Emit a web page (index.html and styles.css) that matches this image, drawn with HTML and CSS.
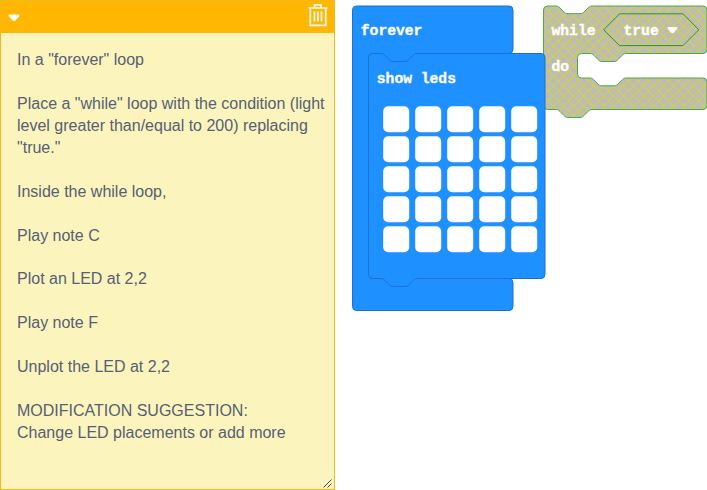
FILE: index.html
```html
<!DOCTYPE html>
<html lang="en">
<head>
<meta charset="utf-8">
<title>Blocks workspace</title>
<link rel="stylesheet" href="styles.css">
</head>
<body>
<main class="workspace">
  <section class="note">
    <header class="note-bar">
      <svg class="arrow" width="12" height="8" viewBox="0 0 12 8"><path d="M1.300.6h9.400q1.300.5.3 1.900L7.300 6.500q-1.300 1.100-2.600 0L1 2.500Q0 1.100 1.300.6z"/></svg>
      <svg class="trash" width="20" height="24" viewBox="0 0 20 24"><path d="M.5 5h19M6.500 5V1.800h6.500V5M2.300 5v17.300h15.400V5M6.500 8.500v10M10 8.500v10M13.500 8.500v10"/></svg>
    </header>
    <div class="note-text">In a "forever" loop

Place a "while" loop with the condition (light
level greater than/equal to 200) replacing
"true."

Inside the while loop,

Play note C

Plot an LED at 2,2

Play note F

Unplot the LED at 2,2

MODIFICATION SUGGESTION:
Change LED placements or add more</div>
    <svg class="grip" width="9" height="9" viewBox="0 0 9 9"><path d="M.5 8.500l8-8M4.500 8.500l4-4"/></svg>
  </section>
  <svg class="canvas" width="372" height="490" viewBox="335 0 372 490">
    <defs>
      <pattern id="hatch" x="543.5" y="6" width="10" height="10" patternUnits="userSpaceOnUse">
        <rect class="hatch-bg" width="10" height="10"/>
        <path class="hatch-line" d="M-1 -1L11 11M11 -1L-1 11M-1 9L1 11M9 -1L11 1M-1 1L1 -1M9 11L11 9"/>
      </pattern>
      <rect id="led" width="26" height="26" rx="5"/>
      <g id="row">
        <use href="#led"/><use href="#led" x="32"/><use href="#led" x="64"/><use href="#led" x="96"/><use href="#led" x="128"/>
      </g>
    </defs>
    <path class="disabled" d="M543.500 10q0-4 4-4H556c2 0 3 1 4 2l4 4c1 1 2 1.700 4 1.700h12c2 0 3-.7 4-1.700l4-4c1-1 2-2 4-2H703q4 0 4 4V49.500q0 4-4 4H626c-2 0-3 1-4 2l-4 4c-1 1-2 2-4 2h-12c-2 0-3-1-4-2l-4-4c-1-1-2-2-4-2h-8.500q-4 0-4 4V74q0 4 4 4H590c2 0 3 1 4 2l4 4c1 1 2 1.800 4 1.800h12c2 0 3-.8 4-1.800l4-4c1-1 2-2 4-2H703q4 0 4 4V105.500q0 4-4 4H592c-2 0-3 1-4 2l-4 4c-1 1-2 2-4 2h-12c-2 0-3-1-4-2l-4-4c-1-1-2-2-4-2H547.500q-4 0-4-4z"/>
    <path class="slot" d="M619.500 13.800H683L698.800 29.800 683 45.600H619.500L603.700 29.800z"/>
    <path class="block" d="M352.500 10q0-4 4-4H509q4 0 4 4V49.500q0 4-4 4V278.500q4 0 4 4V306.500q0 4-4 4H356.500q-4 0-4-4z"/>
    <path class="block" d="M368.500 57.500q0-4 4-4H381c2 0 3 1 4 2l4 4c1 1 2 2 4 2h12c2 0 3-1 4-2l4-4c1-1 2-2 4-2H541q4 0 4 4V274.500q0 4-4 4H417c-2 0-3 1-4 2l-4 4c-1 1-2 2-4 2h-12c-2 0-3-1-4-2l-4-4c-1-1-2-2-4-2H372.500q-4 0-4-4z"/>
    <g class="leds">
      <use href="#row" x="383.200" y="106.300"/><use href="#row" x="383.200" y="136.300"/><use href="#row" x="383.200" y="166.300"/><use href="#row" x="383.200" y="196.300"/><use href="#row" x="383.200" y="226.300"/>
    </g>
    <g class="label">
      <text x="360.800" y="35">forever</text>
      <text x="376.800" y="83">show leds</text>
      <text x="551.500" y="35">while</text>
      <text x="551.500" y="71">do</text>
      <text x="623.500" y="35">true</text>
    </g>
    <path class="caret" d="M668.500 27h8q1.800.3.700 1.700l-3.200 3.800q-1.500 1.300-3 0l-3.200-3.800q-1.100-1.400.7-1.700z"/>
  </svg>
</main>
</body>
</html>
```
FILE: styles.css
```css
body {
  margin: 0;
  background: #fff;
  overflow: hidden;
}
.workspace {
  display: flex;
  width: 707px;
  height: 490px;
}
.note {
  position: relative;
  box-sizing: border-box;
  width: 334.5px;
  height: 490px;
  flex: none;
  border: 1px solid #f2b91a;
  background: #fbf5bd;
}
.note-bar {
  display: flex;
  align-items: center;
  justify-content: space-between;
  box-sizing: border-box;
  height: 32px;
  padding: 0 6px 0 7px;
  background: #ffb703;
}
.arrow {
  fill: #fff;
  margin-top: 2px;
}
.trash {
  fill: none;
  stroke: #fffaf0;
  stroke-width: 1.7;
  margin-top: -4px;
}
.note-text {
  padding: 16px 0 0 16px;
  color: #575e75;
  font: 16px/21.93px "Liberation Sans", Arial, sans-serif;
  white-space: pre;
}
.grip {
  position: absolute;
  right: 2px;
  bottom: 1px;
  fill: none;
  stroke: #444;
  stroke-width: 1;
}
.canvas {
  flex: none;
  margin-left: 0.5px;
}
.block {
  fill: #1e90ff;
  stroke: #1873cc;
}
.hatch-bg {
  fill: #bbb;
}
.hatch-line {
  stroke: #d3d33c;
  stroke-width: 1.1;
}
.disabled {
  fill: url(#hatch);
  stroke: #4ca84c;
}
.slot {
  fill: url(#hatch);
  stroke: #2b942b;
}
.leds,
.caret {
  fill: #fff;
}
.label text {
  fill: #fff;
  stroke: #fff;
  stroke-width: 0.35;
  font: bold 14.67px "Liberation Mono", monospace;
  white-space: pre;
}
```
